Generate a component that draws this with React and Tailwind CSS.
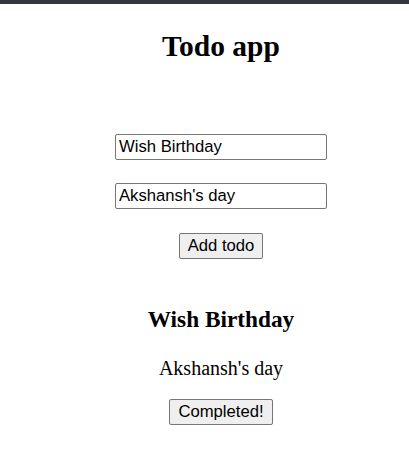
const serif = "font-['Liberation_Serif','Times_New_Roman',serif]"
const sans = "font-['Liberation_Sans',Arial,sans-serif]"

const TodoCard = ({ title, description }) => {
  return (
    <div className="flex flex-col items-center">
      <h2 className={`${serif} mt-[46px] text-[23.3px] leading-[28px] font-bold text-black`}>{title}</h2>
      <p className={`${serif} mt-[23px] text-[20px] leading-[24px] text-black`}>{description}</p>
      <button
        className={`${sans} mt-[19px] h-[26px] px-[8px] text-[16.67px] leading-[20px] text-black bg-[#efefef] border border-[#767676] rounded-[2px]`}
      >
        Completed!
      </button>
    </div>
  )
}

export default function App() {
  return (
    <div className="min-h-[466px] bg-white">
      <div className="h-[4px] bg-[#32363f]" />
      <div className="pl-[33px] flex flex-col items-center">
        <h1 className={`${serif} mt-[26px] text-[29.5px] leading-[32px] font-bold text-black`}>Todo app</h1>

        <input
          type="text"
          defaultValue="Wish Birthday"
          className={`${sans} mt-[72px] w-[212px] h-[26px] px-[3px] text-[16.67px] text-black border border-[#767676] rounded-[2px] outline-none`}
        />
        <input
          type="text"
          defaultValue="Akshansh's day"
          className={`${sans} mt-[23px] w-[212px] h-[26px] px-[3px] text-[16.67px] text-black border border-[#767676] rounded-[2px] outline-none`}
        />
        <button
          className={`${sans} mt-[24px] h-[26px] px-[8px] text-[16.67px] leading-[20px] text-black bg-[#efefef] border border-[#767676] rounded-[2px]`}
        >
          Add todo
        </button>

        <TodoCard title="Wish Birthday" description="Akshansh's day" />
      </div>
    </div>
  )
}
